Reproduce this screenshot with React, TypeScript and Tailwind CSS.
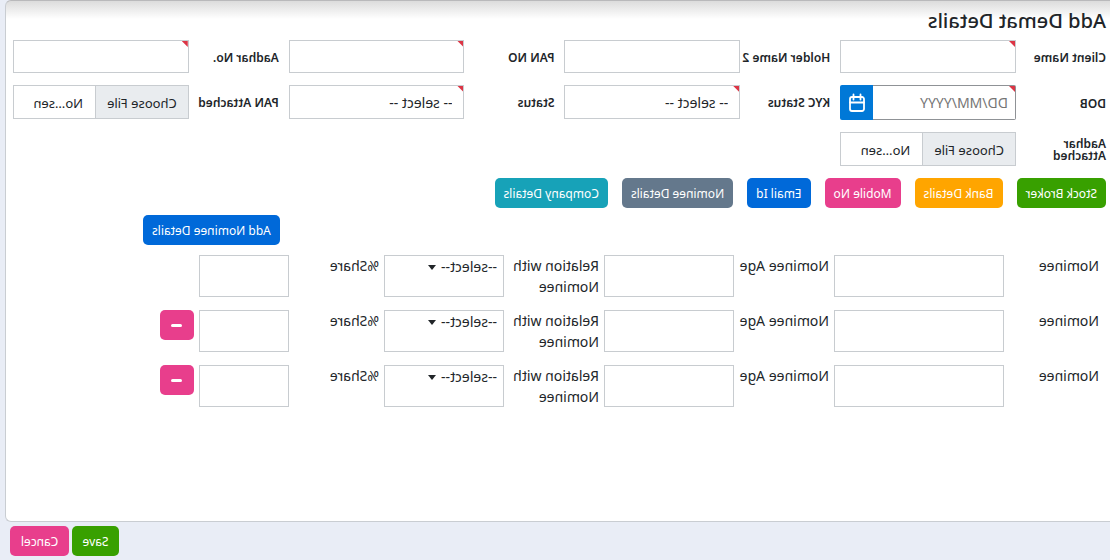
import { useId, type ReactNode } from "react";

const CONTROL =
  "block w-full rounded-none border border-[#c8ccd0] bg-white text-[#212529] outline-none focus:border-[#0078d7]";

function RequiredMark() {
  return (
    <span
      aria-hidden="true"
      className="pointer-events-none absolute top-px left-px size-[6px] bg-[#dc3545] [clip-path:polygon(0_0,100%_0,0_100%)]"
    />
  );
}

function Field({
  label,
  required,
  children,
}: {
  label: string;
  required?: boolean;
  children: (id: string) => ReactNode;
}) {
  const id = useId();
  return (
    <div className="flex items-center">
      <label htmlFor={id} className="w-[90px] shrink-0 pt-[2px] text-xs leading-3 font-semibold">
        {label}
      </label>
      <div className="relative min-w-0 flex-1">
        {children(id)}
        {required && <RequiredMark />}
      </div>
    </div>
  );
}

function TextField({ label, required }: { label: string; required?: boolean }) {
  return (
    <Field label={label} required={required}>
      {(id) => <input id={id} type="text" className={`${CONTROL} h-[33px] px-3 text-sm`} />}
    </Field>
  );
}

function SelectField({ label }: { label: string }) {
  return (
    <Field label={label} required>
      {(id) => (
        <select id={id} className={`${CONTROL} h-[34px] appearance-none px-[11px] pt-[2px] text-sm`}>
          <option>-- select --</option>
        </select>
      )}
    </Field>
  );
}

function FileField({ label }: { label: string }) {
  return (
    <Field label={label}>
      {(id) => (
        <input
          id={id}
          type="file"
          className={`${CONTROL} h-[34px] pr-[18px] text-[13px] leading-8 file:mr-3 file:h-8 file:border-r file:border-[#c8ccd0] file:bg-[#e9ecef] file:px-[11px] file:pt-px file:text-[#212529]`}
        />
      )}
    </Field>
  );
}

function DateField({ label }: { label: string }) {
  return (
    <Field label={label} required>
      {(id) => (
        <div className="flex h-[35px]">
          <input
            id={id}
            type="text"
            placeholder="DD/MM/YYYY"
            className="min-w-0 flex-1 rounded-l-xs border border-r-0 border-[#8f9296] bg-white px-[7px] pt-px text-sm outline-none placeholder:text-[#757575]"
          />
          <button
            type="button"
            aria-label="Open calendar"
            className="flex w-[33px] items-center justify-center rounded-r-xs bg-[#0078d7] text-white"
          >
            <svg width="18" height="20" viewBox="0 0 18 20" fill="none" stroke="currentColor" strokeWidth="1.8">
              <rect x="2" y="4" width="14" height="14" rx="2" />
              <path d="M2 9.5h14M5.5 1.5v5M12.5 1.5v5" strokeLinecap="round" />
            </svg>
          </button>
        </div>
      )}
    </Field>
  );
}

const BUTTON = "flex h-[30px] items-center justify-center rounded-[5px] pt-[2px] text-xs text-white";

const SECTIONS = [
  { label: "Stock Broker", color: "bg-[#38a000]" },
  { label: "Bank Details", color: "bg-[#ffa500]" },
  { label: "Mobile No", color: "bg-[#e83e8c]" },
  { label: "Email Id", color: "bg-[#0069d9]" },
  { label: "Nominee Details", color: "bg-[#64788c]" },
  { label: "Company Details", color: "bg-[#17a2b8]" },
];

function NomineeRow({ removable }: { removable: boolean }) {
  const id = useId();
  const label = "text-sm leading-[21px]";
  const box = `${CONTROL} h-[42px] px-[6px] text-sm`;
  return (
    <div className="grid w-full max-w-[939px] grid-cols-[90px_minmax(0,170fr)_90px_minmax(0,130fr)_90px_minmax(0,120fr)_85px_minmax(0,90fr)_34px] items-start gap-x-[5px]">
      <label htmlFor={`${id}-name`} className={label}>
        Nominee
      </label>
      <input id={`${id}-name`} type="text" className={box} />
      <label htmlFor={`${id}-age`} className={`${label} whitespace-nowrap`}>
        Nominee Age
      </label>
      <input id={`${id}-age`} type="text" className={box} />
      <label htmlFor={`${id}-relation`} className={label}>
        Relation with Nominee
      </label>
      <div className="relative">
        <select id={`${id}-relation`} className={`${box} appearance-none pb-[18px]`}>
          <option>--select--</option>
        </select>
        <svg
          width="8"
          height="5"
          viewBox="0 0 8 5"
          fill="currentColor"
          aria-hidden="true"
          className="pointer-events-none absolute top-[10px] left-[68px]"
        >
          <path d="M0 0h8L4 5z" />
        </svg>
      </div>
      <label htmlFor={`${id}-share`} className={label}>
        %Share
      </label>
      <input id={`${id}-share`} type="text" className={box} />
      {removable && (
        <button
          type="button"
          aria-label="Remove nominee"
          className="flex h-[30px] w-[34px] items-center justify-center rounded-[5px] bg-[#e83e8c]"
        >
          <span className="h-[3px] w-[11px] rounded-full bg-white" />
        </button>
      )}
    </div>
  );
}

export default function App() {
  return (
    <div className="flex min-h-screen -scale-x-100 flex-col bg-[#e9edf6] font-['Noto_Sans','Open_Sans',sans-serif] text-[#212529]">
      <main className="mr-[5px] flex-1 rounded-r-md border border-l-0 border-[#c9cdd2] border-t-[#b9b9bb] bg-white bg-linear-to-b from-[#dcdcdc] to-white to-[18px] pr-[7px] pl-1">
        <h1 className="pt-[6px] text-xl leading-7 font-medium">Add Demat Details</h1>

        <div className="mt-[5px] grid grid-cols-4 items-start gap-x-[10px] gap-y-3">
          <TextField label="Client Name" required />
          <TextField label="Holder Name 2" />
          <TextField label="PAN NO" required />
          <TextField label="Aadhar No." required />
          <DateField label="DOB" />
          <SelectField label="KYC Status" />
          <SelectField label="Status" />
          <FileField label="PAN Attached" />
          <FileField label="Aadhar Attached" />
        </div>

        <nav className="mt-3 flex flex-wrap gap-[14px]">
          {SECTIONS.map((section) => (
            <button key={section.label} type="button" className={`${BUTTON} px-[9px] ${section.color}`}>
              {section.label}
            </button>
          ))}
        </nav>

        <div className="mt-[7px] flex justify-end pr-[130px]">
          <button type="button" className={`${BUTTON} bg-[#0069d9] px-[9px]`}>
            Add Nominee Details
          </button>
        </div>

        <section aria-label="Nominees" className="mt-[10px] flex flex-col gap-[13px] pb-6 pl-[7px]">
          <NomineeRow removable={false} />
          <NomineeRow removable />
          <NomineeRow removable />
        </section>
      </main>

      <footer className="flex justify-end gap-[3px] px-[10px] py-1">
        <button type="button" className={`${BUTTON} bg-[#38a000] px-[10px]`}>
          Save
        </button>
        <button type="button" className={`${BUTTON} bg-[#e83e8c] px-[11px]`}>
          Cancel
        </button>
      </footer>
    </div>
  );
}
